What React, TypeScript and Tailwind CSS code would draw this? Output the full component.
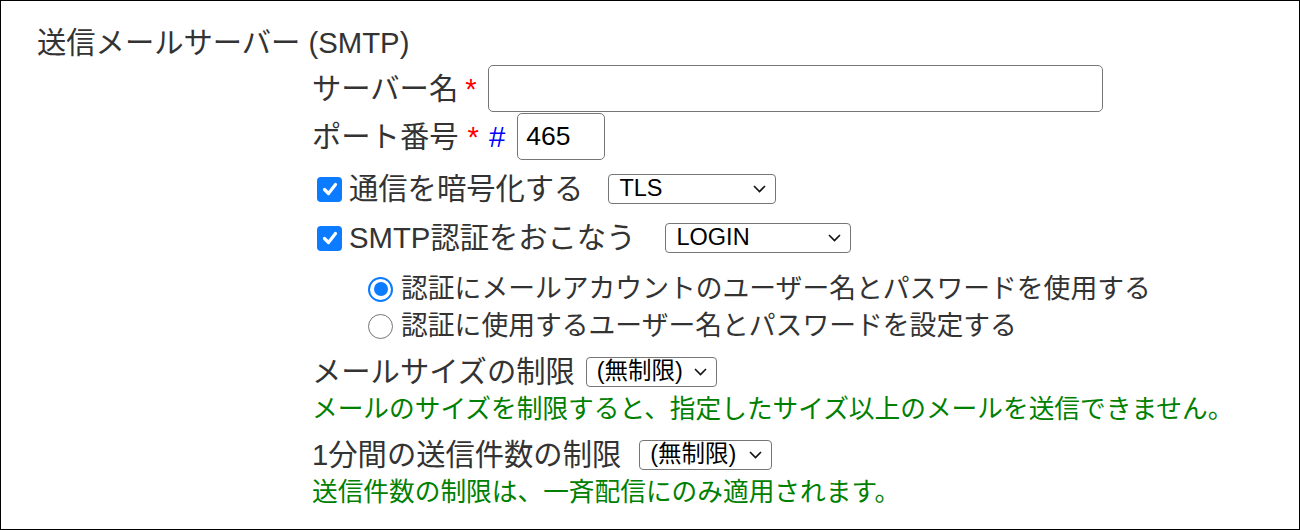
import React from 'react';

const FONT = "font-[family-name:'Liberation_Sans','Noto_Sans_CJK_JP',sans-serif]";

const Chevron: React.FC = () => (
  <svg width="13" height="8" viewBox="0 0 13 8" className="shrink-0">
    <polyline points="1,1 6.5,6.5 12,1" fill="none" stroke="#111" strokeWidth="1.6" />
  </svg>
);

const Select: React.FC<{ value: string; width: string; className?: string }> = ({ value, width, className }) => (
  <div
    className={`flex h-[30px] items-center justify-between rounded-[4px] border-[1.5px] border-[#767676] bg-white pl-[10px] pr-[9px] text-[23.5px] text-black ${width} ${className ?? ''}`}
  >
    <span className="leading-none">{value}</span>
    <Chevron />
  </div>
);

const Checkbox: React.FC = () => (
  <span className="ml-[5px] flex h-[25px] w-[25px] shrink-0 items-center justify-center rounded-[4px] bg-[#0b7bff]">
    <svg width="18" height="18" viewBox="0 0 18 18">
      <path d="M3.5 9.5 L7.5 13.5 L14.5 4.5" fill="none" stroke="white" strokeWidth="3.2" strokeLinecap="round" strokeLinejoin="round" />
    </svg>
  </span>
);

const Radio: React.FC<{ checked?: boolean }> = ({ checked }) =>
  checked ? (
    <span className="ml-[56px] flex h-[25px] w-[25px] shrink-0 items-center justify-center rounded-full border-[2.5px] border-[#0b7bff] bg-white">
      <span className="h-[14px] w-[14px] rounded-full bg-[#0b7bff]" />
    </span>
  ) : (
    <span className="ml-[56px] h-[25px] w-[25px] shrink-0 rounded-full border-[1.5px] border-[#767676] bg-white" />
  );

export default function App() {
  return (
    <div className={`h-[530px] w-[1300px] border border-black bg-white text-[#333] whitespace-nowrap ${FONT}`}>
      {/* 見出し */}
      <div className="flex h-[38px] items-center pl-[36px] mt-[23px] text-[29.3px]">
        送信メールサーバー (SMTP)
      </div>

      <div className="flex flex-col pl-[311px]">
        {/* サーバー名 */}
        <div className="mt-[3px] flex h-[47px] items-center text-[29.3px]">
          <span>サーバー名</span>
          <span className="ml-[7px] text-[#ff0000]">*</span>
          <div className="ml-[11px] h-[47px] w-[615px] rounded-[5px] border-[1.5px] border-[#767676] bg-white" />
        </div>

        {/* ポート番号 */}
        <div className="mt-[1px] flex h-[47px] items-center text-[29.3px]">
          <span>ポート番号</span>
          <span className="ml-[9px] text-[#ff0000]">*</span>
          <span className="ml-[10px] text-[#0000ff]">#</span>
          <div className="ml-[12px] flex h-[47px] w-[88px] items-center rounded-[5px] border-[1.5px] border-[#767676] bg-white pl-[8px] text-[26.5px] text-black">
            465
          </div>
        </div>

        {/* 暗号化 */}
        <div className="flex h-[58px] items-center text-[29.3px]">
          <Checkbox />
          <span className="ml-[7px]">通信を暗号化する</span>
          <Select value="TLS" width="w-[168px]" className="ml-[25px]" />
        </div>

        {/* SMTP認証 */}
        <div className="flex h-[40px] items-center text-[29.3px]">
          <Checkbox />
          <span className="ml-[7px]">SMTP認証をおこなう</span>
          <Select value="LOGIN" width="w-[186px]" className="ml-[30px]" />
        </div>

        {/* 認証方式 */}
        <div className="mt-[12px] flex h-[38px] items-center text-[26.8px]">
          <Radio checked />
          <span className="ml-[8px]">認証にメールアカウントのユーザー名とパスワードを使用する</span>
        </div>
        <div className="flex h-[36px] items-center text-[26.8px]">
          <Radio />
          <span className="ml-[8px]">認証に使用するユーザー名とパスワードを設定する</span>
        </div>

        {/* メールサイズ */}
        <div className="mt-[10px] flex h-[36px] items-center text-[29.3px]">
          <span>メールサイズの制限</span>
          <Select value="(無制限)" width="w-[131px]" className="ml-[11px]" />
        </div>
        <div className="flex h-[38px] items-center text-[25.7px] text-[#008000]">
          メールのサイズを制限すると、指定したサイズ以上のメールを送信できません。
        </div>

        {/* 送信件数 */}
        <div className="mt-[8px] flex h-[38px] items-center text-[29.3px]">
          <span>1分間の送信件数の制限</span>
          <Select value="(無制限)" width="w-[133px]" className="ml-[18px]" />
        </div>
        <div className="flex h-[36px] items-center text-[25.7px] text-[#008000]">
          送信件数の制限は、一斉配信にのみ適用されます。
        </div>
      </div>
    </div>
  );
}
